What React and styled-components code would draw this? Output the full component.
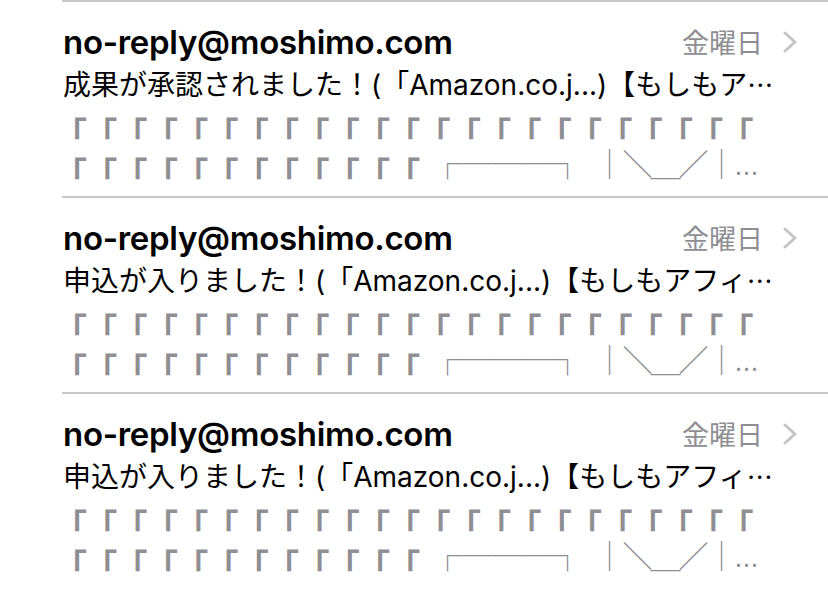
import React from "react";
import styled, { createGlobalStyle } from "styled-components";

const Global = createGlobalStyle`
  *, *::before, *::after { box-sizing: border-box; }
  html, body { margin: 0; padding: 0; background: #ffffff; }
  body {
    font-family: "Inter", "Noto Sans CJK JP", sans-serif;
    -webkit-font-smoothing: antialiased;
    text-spacing-trim: space-all;
  }
`;

const List = styled.div`
  width: 828px;
  height: 599px;
  overflow: hidden;
  background: #fff;
  display: flex;
  flex-direction: column;
`;

const Row = styled.div`
  margin-left: 62px;
  border-top: 2px solid #c8c7cc;
  height: 196px;
  padding: 19px 31px 0 1px;
  display: flex;
  flex-direction: column;
  flex-shrink: 0;
`;

const Header = styled.div`
  display: flex;
  align-items: center;
  justify-content: space-between;
  height: 42px;
`;

const Sender = styled.div`
  font-family: "Inter", sans-serif;
  font-weight: 600;
  font-size: 33px;
  letter-spacing: -0.3px;
  color: #000;
  line-height: 42px;
  white-space: nowrap;
`;

const Meta = styled.div`
  display: flex;
  align-items: center;
  gap: 20px;
`;

const DateText = styled.span`
  font-family: "Noto Sans CJK JP", sans-serif;
  font-size: 27px;
  color: #8e8e93;
  line-height: 42px;
`;

const Subject = styled.div`
  font-family: "Inter", "Noto Sans CJK JP", sans-serif;
  font-size: 28px;
  line-height: 42px;
  color: #000;
  white-space: nowrap;
  overflow: hidden;
  text-spacing-trim: space-all;
`;

const CjkEllipsis = styled.span`
  font-family: "Noto Sans CJK JP", sans-serif;
  font-size: 26px;
`;

const Preview = styled.div`
  font-family: "Noto Sans CJK JP", sans-serif;
  font-size: 30px;
  line-height: 40px;
  height: 40px;
  color: #8e8e93;
  white-space: nowrap;
  overflow: hidden;
  text-spacing-trim: space-all;
  margin-top: ${(p) => (p.$first ? "3px" : "0")};
`;

const Corners = styled.span`
  font-weight: 700;
  font-size: 33px;
  letter-spacing: -2.7px;
  line-height: 0;
  margin-left: -9px;
  vertical-align: -4px;
`;

const Box = styled.span`
  font-weight: 700;
  line-height: 0;
  margin-left: 15px;
  vertical-align: 7px;
`;

const Face = styled.span`
  font-weight: 400;
  line-height: 0;
  margin-left: 12px;
  letter-spacing: -2px;
  vertical-align: 7px;
`;

const Dots = styled.span`
  font-size: 24px;
  line-height: 0;
`;

const Chevron = () => (
  <svg width="14" height="22" viewBox="0 0 14 22">
    <path d="M2 2 L12 11 L2 20" fill="none" stroke="#c4c4c7" strokeWidth="3" strokeLinecap="round" strokeLinejoin="round" />
  </svg>
);

const corners = (n) => "「".repeat(n);

const mails = [
  { subject: "成果が承認されました！(「Amazon.co.j...)【もしもア" },
  { subject: "申込が入りました！(「Amazon.co.j...)【もしもアフィ" },
  { subject: "申込が入りました！(「Amazon.co.j...)【もしもアフィ" },
];

export default function App() {
  return (
    <>
      <Global />
      <List>
        {mails.map((m, i) => (
          <Row key={i}>
            <Header>
              <Sender>no-reply@moshimo.com</Sender>
              <Meta>
                <DateText>金曜日</DateText>
                <Chevron />
              </Meta>
            </Header>
            <Subject>
              {m.subject}
              <CjkEllipsis>…</CjkEllipsis>
            </Subject>
            <Preview $first>
              <Corners>{corners(23)}</Corners>
            </Preview>
            <Preview>
              <Corners>{corners(12)}</Corners>
              <Box>┌───┐</Box>
              <Face>│＼＿／│</Face>
              <Dots>…</Dots>
            </Preview>
          </Row>
        ))}
      </List>
    </>
  );
}
